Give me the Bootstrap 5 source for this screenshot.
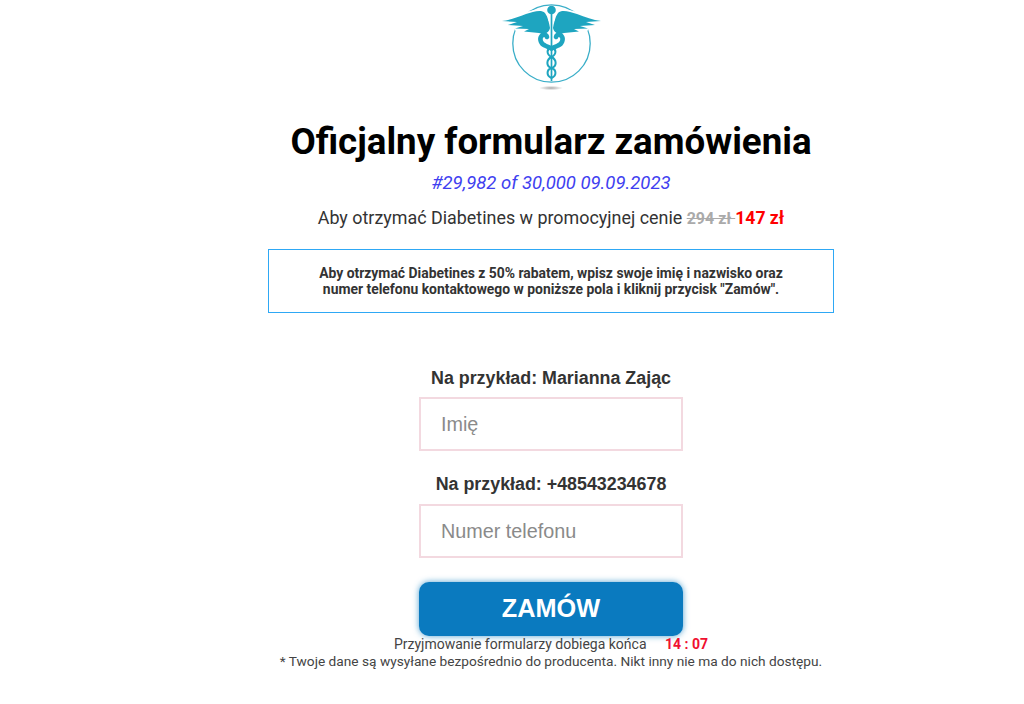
<!DOCTYPE html>
<html lang="pl"><head><meta charset="utf-8"><title>Formularz</title>
<link href="https://cdn.jsdelivr.net/npm/bootstrap@5.3.0/dist/css/bootstrap.min.css" rel="stylesheet">
<style>
body{background:#fff;font-family:Roboto,sans-serif;color:#333;overflow:hidden}
.page-col{width:566px;margin-left:268px}
.logo-svg{display:block;width:140px;height:100px;margin:0 auto;}
.main-title{font-size:36.7px;font-weight:700;color:#000;line-height:42px;margin:21px 0 0;white-space:nowrap}
.sub-date{font-size:18.5px;font-style:italic;color:#4040f0;line-height:22px;margin:9px 0 0}
.promo{font-size:17.9px;line-height:22px;color:#333;margin:13px 0 0}
.promo s{color:#aaa;font-weight:700;font-size:16px}
.promo b{color:#f00;font-size:17.6px}
.notice{border:1px solid #2ea8f5;height:64px;margin-top:19px;font-size:13.9px;font-weight:700;line-height:16px;padding-top:15px}
.order-form{width:264px;margin:55px auto 0}
.hint{font-family:"Liberation Sans",sans-serif;font-size:17.85px;font-weight:700;color:#333;line-height:20px;margin:0 -20px 9px;white-space:nowrap}
.hint-second{margin-top:23px;margin-bottom:10px}
.field{height:54px;border:2px solid #f3d9e0;border-radius:0;font-family:"Liberation Sans",sans-serif;font-size:19.8px;padding:0 20px;color:#333}
.field::placeholder{color:#8a8a8a;opacity:1}
.order-btn{height:54px;margin-top:24px;background:#0a7abf;color:#fff;border:0;border-radius:10px;font-family:"Liberation Sans",sans-serif;font-size:25.3px;font-weight:700;box-shadow:0 0 6px rgba(10,122,191,.7)}
.order-btn:hover{background:#0a7abf;color:#fff}
.timer-line{font-size:14px;line-height:16px;color:#444;white-space:nowrap}
.timer-line b{color:#f01030;margin-left:15px;font-size:14px}
.fine{font-size:13.7px;line-height:16px;color:#444;margin-top:1px;white-space:nowrap}
</style></head>
<body>
<div class="page-col text-center">
<svg class="logo-svg" viewBox="0 0 140 100" aria-label="logo">
  <defs><radialGradient id="sh"><stop offset="0" stop-color="#aaa"/><stop offset="1" stop-color="#fff"/></radialGradient></defs>
  <circle cx="70.5" cy="43.5" r="38.7" fill="none" stroke="#3aaec8" stroke-width="1.3"/>
  <ellipse cx="70" cy="88" rx="12" ry="2.2" fill="url(#sh)"/>
  <path d="M21 21C29 20 37 17 45 14 52 12 60 9 64 13 67 17 68 23 69 28 68 33 63 35 58 33L43 31.500 48 29 34 28.500 42 26 27 25 36 22Z" fill="#fff" stroke="#fff" stroke-width="4"/>
  <path d="M21 21C29 20 37 17 45 14 52 12 60 9 64 13 67 17 68 23 69 28 68 33 63 35 58 33L43 31.500 48 29 34 28.500 42 26 27 25 36 22Z" fill="#1ea5c0"/>
  <g transform="matrix(-1 0 0 1 141 0)">
    <path d="M21 21C29 20 37 17 45 14 52 12 60 9 64 13 67 17 68 23 69 28 68 33 63 35 58 33L43 31.500 48 29 34 28.500 42 26 27 25 36 22Z" fill="#fff" stroke="#fff" stroke-width="4"/>
    <path d="M21 21C29 20 37 17 45 14 52 12 60 9 64 13 67 17 68 23 69 28 68 33 63 35 58 33L43 31.500 48 29 34 28.500 42 26 27 25 36 22Z" fill="#1ea5c0"/>
  </g>
  <path d="M67 14H74V20C72 22 69 22 67 20Z" fill="#fff"/>
  <circle cx="70.500" cy="10" r="4.300" fill="#1ea5c0"/>
  <path d="M70.500 14V81" stroke="#1ea5c0" stroke-width="1.700"/>
  <path d="M66 37C65 34 62 34 60.500 36 58 39 60 44 64 45.500 66 46.500 68 47 70.500 48.500M75 37C76 34 79 34 80.500 36 83 39 81 44 77 45.500 75 46.500 73 47 70.500 48.500" fill="none" stroke="#1ea5c0" stroke-width="4.600" stroke-linecap="round"/>
  <path d="M70.500 47C65.500 49 65 54 70.500 57 76 60 76 66 70.500 68 65 70 65.500 76 70.500 78M70.500 47C75.500 49 76 54 70.500 57 65 60 65 66 70.500 68 76 70 75.500 76 70.500 78" fill="none" stroke="#1ea5c0" stroke-width="2"/>
</svg>
<h1 class="main-title">Oficjalny formularz zamówienia</h1>
<p class="sub-date">#29,982 of 30,000 09.09.2023</p>
<p class="promo">Aby otrzymać Diabetines w promocyjnej cenie <s>294 zł </s><b>147 zł</b></p>
<div class="notice">Aby otrzymać Diabetines z 50% rabatem, wpisz swoje imię i nazwisko oraz<br>numer telefonu kontaktowego w poniższe pola i kliknij przycisk "Zamów".</div>
<form class="order-form">
  <label class="hint d-block" for="f1">Na przykład: Marianna Zając</label>
  <input id="f1" class="form-control field" placeholder="Imię">
  <label class="hint hint-second d-block" for="f2">Na przykład: +48543234678</label>
  <input id="f2" class="form-control field" placeholder="Numer telefonu">
  <button type="button" class="btn order-btn w-100 d-block">ZAMÓW</button>
</form>
<div class="timer-line">Przyjmowanie formularzy dobiega końca <b>14 : 07</b></div>
<div class="fine">* Twoje dane są wysyłane bezpośrednio do producenta. Nikt inny nie ma do nich dostępu.</div>
</div>
</body></html>
